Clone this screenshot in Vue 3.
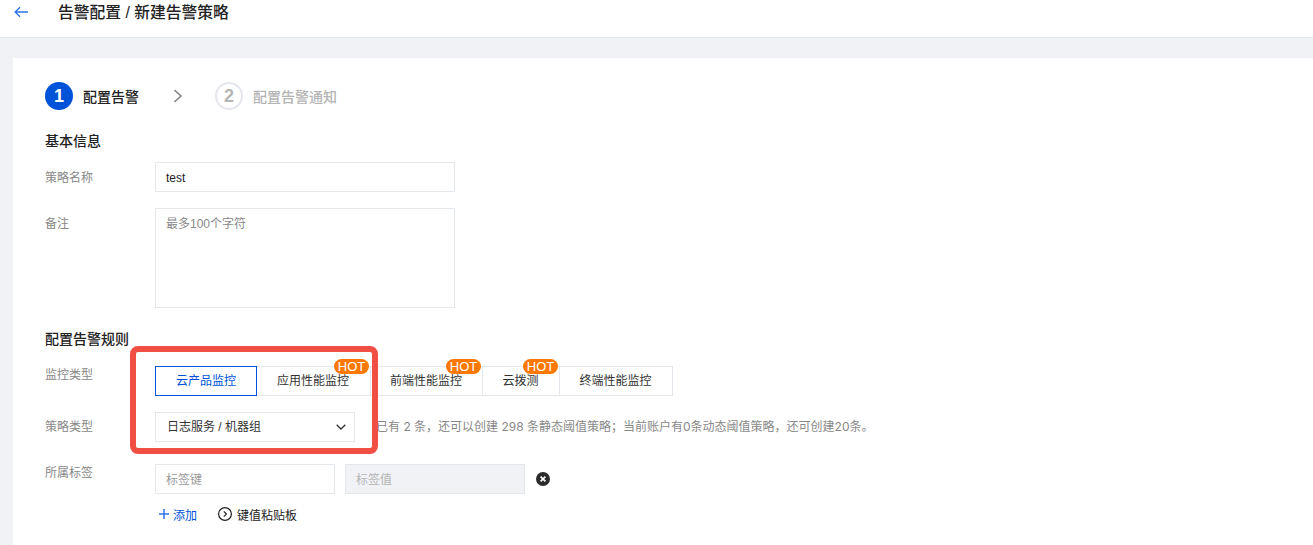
<script setup>
const tabs = [
  { label: '云产品监控', active: true, w: 102 },
  { label: '应用性能监控', hot: true, w: 115 },
  { label: '前端性能监控', hot: true, w: 113 },
  { label: '云拨测', hot: true, w: 78 },
  { label: '终端性能监控', w: 114 }
]
</script>

<template>
  <div class="page">
    <header class="topbar">
      <svg class="back" width="14" height="12" viewBox="0 0 14 12" fill="none">
        <path d="M14 6H1.2M6 1.2L1.2 6L6 10.8" stroke="#2f74e8" stroke-width="1.4" />
      </svg>
      <h1 class="title">告警配置 / 新建告警策略</h1>
    </header>
    <main class="card">
      <div class="steps">
        <span class="dot on">1</span>
        <span class="step-text">配置告警</span>
        <svg class="chev" width="10" height="14" viewBox="0 0 10 14" fill="none">
          <path d="M1.5 1.2L8 7L1.5 12.8" stroke="#888" stroke-width="1.6" />
        </svg>
        <span class="dot off">2</span>
        <span class="step-text muted">配置告警通知</span>
      </div>

      <h2 class="section first">基本信息</h2>
      <div class="row r-name">
        <label class="label">策略名称</label>
        <div class="input w300 value">test</div>
      </div>
      <div class="row r-note">
        <label class="label">备注</label>
        <div class="textarea">最多100个字符</div>
      </div>

      <h2 class="section second">配置告警规则</h2>
      <div class="row r-type">
        <label class="label">监控类型</label>
        <div class="tabs">
          <div
            v-for="t in tabs"
            :key="t.label"
            class="tab"
            :class="{ active: t.active }"
            :style="{ width: t.w + 'px' }"
          >
            {{ t.label }}
            <span v-if="t.hot" class="hot">HOT</span>
          </div>
        </div>
      </div>
      <div class="row r-policy">
        <label class="label">策略类型</label>
        <div class="select">
          <span>日志服务 / 机器组</span>
          <svg width="10" height="6" viewBox="0 0 10 6" fill="none">
            <path d="M.7.7L5 5l4.3-4.3" stroke="#333" stroke-width="1.3" />
          </svg>
        </div>
        <span class="hint">已有 2 条，还可以创建 298 条静态阈值策略；当前账户有0条动态阈值策略，还可创建20条。</span>
      </div>
      <div class="row r-tag">
        <label class="label">所属标签</label>
        <div class="tag-wrap">
          <div class="tag-line">
            <div class="input w180 ph">标签键</div>
            <div class="input w180 ph disabled">标签值</div>
            <svg class="close" width="14" height="14" viewBox="0 0 14 14">
              <circle cx="7" cy="7" r="7" fill="#2b2b2b" />
              <path d="M4.6 4.6l4.8 4.8M9.4 4.6l-4.8 4.8" stroke="#fff" stroke-width="1.6" />
            </svg>
          </div>
          <div class="actions">
            <span class="add">
              <svg width="10" height="10" viewBox="0 0 10 10" fill="none">
                <path d="M5 0v10M0 5h10" stroke="#2f74e8" stroke-width="1.5" />
              </svg>
              添加
            </span>
            <span class="paste">
              <svg width="14" height="14" viewBox="0 0 14 14" fill="none">
                <circle cx="7" cy="7" r="6.4" stroke="#222" stroke-width="1.2" />
                <path d="M5.8 4.3L8.4 7l-2.6 2.7" stroke="#222" stroke-width="1.2" />
              </svg>
              键值粘贴板
            </span>
          </div>
        </div>
      </div>
    </main>
    <div class="red-box"></div>
  </div>
</template>

<style>
html, body { margin: 0; overflow: hidden; }
</style>

<style scoped>
.page {
  position: relative;
  width: 1313px;
  height: 545px;
  overflow: hidden;
  background: #f1f2f6;
  font-family: "Liberation Sans", "Noto Sans CJK SC", sans-serif;
  font-size: 12px;
  color: #222;
}
.topbar {
  height: 37px;
  background: #fff;
  border-bottom: 1px solid #e5e7ee;
  display: flex;
  align-items: flex-start;
  padding: 0 0 0 14px;
}
.back { margin-top: 6px; }
.title {
  margin: 1px 0 0 30px;
  font-size: 15.75px;
  line-height: 24px;
  font-weight: 500;
  color: #222;
}
.card {
  margin: 20px 0 0 13px;
  background: #fff;
  height: 500px;
  padding: 24px 0 0 32px;
  box-sizing: border-box;
}
.steps { display: flex; align-items: center; height: 28px; }
.dot {
  width: 28px;
  height: 28px;
  box-sizing: border-box;
  border-radius: 50%;
  display: flex;
  align-items: center;
  justify-content: center;
  font-size: 18px;
  font-weight: 700;
}
.dot.on { background: #0052d9; color: #fff; }
.dot.off { border: 2px solid #e5e7ee; color: #b4b4b4; }
.step-text { margin-left: 10px; font-size: 14px; font-weight: 500; color: #222; }
.step-text.muted { color: #b4b4b4; }
.chev { margin: 0 32px 0 34px; }
.section { margin: 0; font-size: 14px; line-height: 20px; font-weight: 500; color: #222; }
.section.first { margin-top: 21px; }
.section.second { margin-top: 21px; }
.row { display: flex; align-items: flex-start; }
.label { width: 110px; flex: none; color: #888; line-height: 30px; }
.r-name { margin-top: 11px; }
.r-note { margin-top: 14px; }
.r-name .label, .r-note .label { line-height: 32px; }
.r-type { margin-top: 17px; }
.r-type .label, .r-tag .label { line-height: 18px; }
.r-policy { margin-top: 16px; }
.r-tag { margin-top: 22px; }
.input {
  height: 30px;
  box-sizing: border-box;
  border: 1px solid #e5e7ee;
  background: #fff;
  padding: 0 10px;
  line-height: 30px;
}
.w300 { width: 300px; }
.w180 { width: 180px; }
.value { color: #222; }
.ph { color: #999; }
.disabled { background: #f1f2f6; color: #b4b4b4; }
.textarea {
  width: 300px;
  height: 100px;
  box-sizing: border-box;
  border: 1px solid #e5e7ee;
  padding: 7px 10px;
  line-height: 16px;
  color: #888;
}
.tabs { display: flex; }
.tab {
  position: relative;
  height: 30px;
  box-sizing: border-box;
  border: 1px solid #e5e7ee;
  margin-left: -1px;
  padding: 0 1px 3px 0;
  display: flex;
  align-items: center;
  justify-content: center;
  color: #333;
  flex: none;
}
.tab:first-child { margin-left: 0; padding-right: 0; }
.tab.active { border-color: #0052d9; color: #0052d9; z-index: 1; }
.hot {
  position: absolute;
  right: 1px;
  top: -8px;
  height: 15px;
  width: 35px;
  border-radius: 8px;
  background: #ff7800;
  color: #fff;
  font-size: 13px;
  line-height: 15px;
  text-align: center;
}
.select {
  width: 200px;
  height: 30px;
  box-sizing: border-box;
  border: 1px solid #e5e7ee;
  display: flex;
  align-items: center;
  justify-content: space-between;
  padding: 0 8px 3px 11px;
  color: #333;
}
.select svg { margin-top: 3px; }
.hint {
  margin-left: 21px;
  line-height: 30px;
  color: #888;
  white-space: nowrap;
  font-family: Inter, "Noto Sans CJK SC", sans-serif;
}
.tag-line { display: flex; align-items: center; gap: 10px; }
.close { margin-left: 1px; }
.actions { display: flex; align-items: center; margin-top: 11px; height: 18px; padding-left: 4px; }
.add { display: flex; align-items: center; gap: 4px; color: #0052d9; }
.paste { display: flex; align-items: center; gap: 5px; margin-left: 21px; color: #222; }
.red-box {
  position: absolute;
  left: 130px;
  top: 346px;
  width: 248px;
  height: 108px;
  box-sizing: border-box;
  border: 6px solid #f14f43;
  border-radius: 8px;
  pointer-events: none;
}
</style>
